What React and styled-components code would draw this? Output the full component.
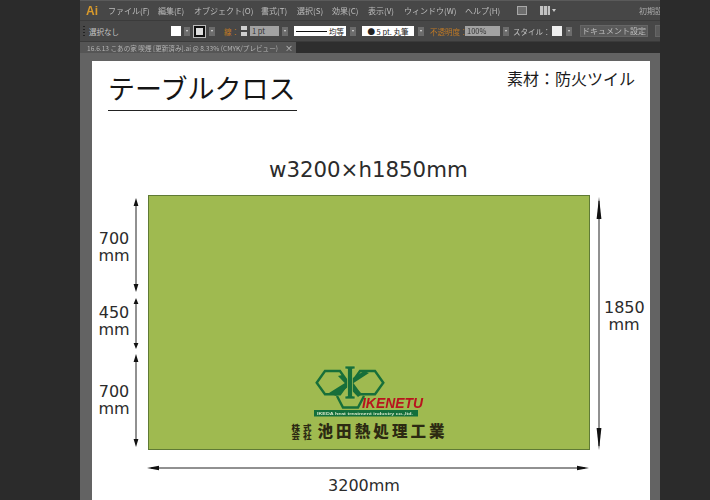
import styled, { createGlobalStyle } from 'styled-components';

const JP = `"Noto Sans CJK JP", "Noto Sans", sans-serif`;

const GlobalStyle = createGlobalStyle`
  html, body {
    margin: 0;
    background: #2b2b2b;
  }
`;

const menus = [
  ['ファイル(F)', 40],
  ['編集(E)', 26],
  ['オブジェクト(O)', 57],
  ['書式(T)', 26],
  ['選択(S)', 25],
  ['効果(C)', 26],
  ['表示(V)', 26],
  ['ウィンドウ(W)', 51],
  ['ヘルプ(H)', 34],
];

function Arrow({ length, head = 8, horizontal }) {
  if (horizontal) {
    return (
      <ArrowSvg width={length} height="10" viewBox={`0 0 ${length} 10`}>
        <path d={`M4 5H${length - 4}`} stroke="#222" strokeWidth="1" />
        <path d={`M0 5L${head} 2.8V7.2Z`} fill="#111" />
        <path d={`M${length} 5L${length - head} 2.8V7.2Z`} fill="#111" />
      </ArrowSvg>
    );
  }
  return (
    <ArrowSvg width="10" height={length} viewBox={`0 0 10 ${length}`}>
      <path d={`M5 4V${length - 4}`} stroke="#222" strokeWidth="1" />
      <path d={`M5 0L2.6 ${head}H7.4Z`} fill="#111" />
      <path d={`M5 ${length}L2.6 ${length - head}H7.4Z`} fill="#111" />
    </ArrowSvg>
  );
}

function Logo() {
  return (
    <LogoSvg width="155" height="58" viewBox="0 0 155 58">
      <g fill="none" stroke="#176f3a" strokeWidth="2.4">
        <path d="M24.7 19.7L33 8H48L56.3 19.7L48 31.3H33Z" />
        <path d="M91.3 19.7L83 8H68L59.7 19.7L68 31.3H83Z" />
        <path d="M45 33L51 44.5H66L72 33" />
      </g>
      <path d="M37 30L72 8L77 10L60 21L44 33Z" fill="#176f3a" />
      <path d="M46 13L50 12L70 31L66 34Z" fill="#176f3a" />
      <path d="M53 3H63V6H60.5V33H63V36H53V33H55.5V6H53Z" fill="#176f3a" stroke="#a9c45c" strokeWidth="0.7" />
      <LogoName x="70" y="45" textLength="61" lengthAdjust="spacingAndGlyphs">IKENETU</LogoName>
      <rect x="22" y="47" width="104" height="6.5" fill="#146f3c" />
      <LogoBanner x="25" y="52" textLength="96" lengthAdjust="spacingAndGlyphs">IKEDA heat treatment industry co.,ltd.</LogoBanner>
    </LogoSvg>
  );
}

export default function App() {
  return (
    <>
      <GlobalStyle />
      <Page>
        <Side />
        <Workspace>
          <MenuBar>
            <AiMark>Ai</AiMark>
            <Menus>
              {menus.map(([label, w]) => (
                <MenuItem key={label} $w={w}>{label}</MenuItem>
              ))}
            </Menus>
            <BarIcon $ml={18} />
            <LayoutIcon />
            <Caret $ml={2} />
            <PresetLabel>初期設定</PresetLabel>
          </MenuBar>

          <Toolbar>
            <Grip />
            <ToolLabel $w={82}>選択なし</ToolLabel>
            <Swatch />
            <DropButton $ml={3} />
            <StrokeSwatch />
            <DropButton $ml={4} />
            <OrangeLabel $ml={9} $w={17}>線：</OrangeLabel>
            <Stepper />
            <InputBox $w={29}>1 pt</InputBox>
            <DropButton $ml={3} />
            <WhiteSelect $ml={6} $w={52}>
              <StrokeLine />
              <span>均等</span>
            </WhiteSelect>
            <DropButton $ml={4} />
            <WhiteSelect $ml={6} $w={52}>
              <span>● 5 pt. 丸筆</span>
            </WhiteSelect>
            <DropButton $ml={4} />
            <OrangeLabel $ml={6} $w={32}>不透明度：</OrangeLabel>
            <InputBox $w={35}>100%</InputBox>
            <DropButton $ml={3} />
            <ToolLabel $ml={4} $w={39}>スタイル：</ToolLabel>
            <SmallSwatch />
            <DropButton $ml={4} />
            <DocButton $ml={8} $w={66}>ドキュメント設定</DocButton>
            <DocButton $ml={7} $w={12} />
          </Toolbar>

          <TabBar>
            <Tab>
              <span>16.6.13 こあの家 喫煙 [更新済み].ai @ 8.33% (CMYK/プレビュー)</span>
              <TabClose>×</TabClose>
            </Tab>
          </TabBar>

          <Canvas>
            <Artboard>
              <Header>
                <Title>テーブルクロス</Title>
                <Material>素材：防火ツイル</Material>
              </Header>

              <SizeHeading>w3200×h1850mm</SizeHeading>

              <Diagram>
                <LeftDims>
                  <Segment $h={94}>
                    <DimLabel $shift={2}>700<br />mm</DimLabel>
                    <Arrow length={94} />
                  </Segment>
                  <Segment $h={51}>
                    <DimLabel $shift={-2}>450<br />mm</DimLabel>
                    <Arrow length={51} head={6} />
                  </Segment>
                  <Segment $h={93}>
                    <DimLabel $shift={-1}>700<br />mm</DimLabel>
                    <Arrow length={93} />
                  </Segment>
                </LeftDims>

                <Board>
                  <Logo />
                  <CompanyRow>
                    <CompanyKind>株式<br />会社</CompanyKind>
                    <CompanyName>池田熱処理工業</CompanyName>
                  </CompanyRow>
                </Board>

                <RightDim>
                  <Arrow length={253} head={22} />
                  <RightLabel $shift={-1}>1850<br />mm</RightLabel>
                </RightDim>
              </Diagram>

              <WidthDim>
                <Arrow horizontal length={442} head={12} />
                <WidthLabel>3200mm</WidthLabel>
              </WidthDim>
            </Artboard>
          </Canvas>
        </Workspace>
        <Side $right />
      </Page>
    </>
  );
}

const Page = styled.div`
  display: flex;
  width: 710px;
  height: 500px;
  overflow: hidden;
  font-family: ${JP};
`;

const Side = styled.div`
  width: ${(p) => (p.$right ? 50 : 80)}px;
  flex: none;
  background: #2b2b2b;
`;

const Workspace = styled.div`
  width: 580px;
  flex: none;
  display: flex;
  flex-direction: column;
  background: #636363;
  overflow: hidden;
`;

const MenuBar = styled.div`
  height: 20px;
  flex: none;
  display: flex;
  align-items: center;
  background: #474747;
  border-top: 1px solid #5a5a5a;
  box-sizing: border-box;
  white-space: nowrap;
  filter: blur(0.3px);

  > * {
    flex: none;
  }
`;

const AiMark = styled.div`
  width: 28px;
  padding-left: 6px;
  box-sizing: border-box;
  color: #d99a2b;
  font: bold 12px "Liberation Sans", sans-serif;
`;

const Menus = styled.div`
  display: flex;
  gap: 10px;
`;

const MenuItem = styled.div`
  width: ${(p) => p.$w}px;
  color: #bdbdbd;
  font-size: 8px;
  white-space: nowrap;
`;

const BarIcon = styled.div`
  margin-left: ${(p) => p.$ml}px;
  width: 8px;
  height: 7px;
  border: 1px solid #a8a8a8;
  background: #6e6e6e;
`;

const LayoutIcon = styled.div`
  margin-left: 13px;
  width: 10px;
  height: 9px;
  background: repeating-linear-gradient(90deg, #c2c2c2 0 3px, #6a6a6a 3px 4px);
`;

const Caret = styled.div`
  margin-left: ${(p) => p.$ml}px;
  width: 0;
  height: 0;
  border-left: 2.5px solid transparent;
  border-right: 2.5px solid transparent;
  border-top: 3px solid #c8c8c8;
`;

const PresetLabel = styled.div`
  margin-left: 83px;
  color: #aaa;
  font-size: 8px;
`;

const Toolbar = styled.div`
  height: 21px;
  flex: none;
  display: flex;
  align-items: center;
  background: #474747;
  border-top: 1px solid #3b3b3b;
  box-sizing: border-box;
  white-space: nowrap;
  font-size: 7.5px;
  color: #c4c4c4;
  filter: blur(0.3px);

  > * {
    flex: none;
  }
`;

const Grip = styled.div`
  width: 2px;
  height: 11px;
  margin-left: 3px;
  margin-right: 4px;
  background: repeating-linear-gradient(180deg, #222 0 1px, transparent 1px 3px);
`;

const ToolLabel = styled.div`
  margin-left: ${(p) => p.$ml || 0}px;
  width: ${(p) => p.$w}px;
  white-space: nowrap;
`;

const OrangeLabel = styled(ToolLabel)`
  color: #c27a24;
`;

const Swatch = styled.div`
  width: 10px;
  height: 10px;
  background: #fff;
`;

const StrokeSwatch = styled.div`
  margin-left: 4px;
  width: 7px;
  height: 7px;
  border: 2px solid #111;
  outline: 1px solid #bbb;
  background: #ddd;
`;

const SmallSwatch = styled(Swatch)`
  background: #eee;
`;

const DropButton = styled.div`
  margin-left: ${(p) => p.$ml}px;
  width: 6px;
  height: 9px;
  background: #6c6c6c;
  position: relative;

  &::after {
    content: '';
    position: absolute;
    left: 1.5px;
    top: 3.5px;
    border-left: 1.5px solid transparent;
    border-right: 1.5px solid transparent;
    border-top: 2px solid #ddd;
  }
`;

const Stepper = styled.div`
  width: 6px;
  height: 10px;
  background: linear-gradient(180deg, #cfcfcf 0 4px, #474747 4px 6px, #cfcfcf 6px);
`;

const InputBox = styled.div`
  margin-left: 3px;
  width: ${(p) => p.$w}px;
  height: 10px;
  line-height: 10px;
  padding-left: 2px;
  box-sizing: border-box;
  background: #a2a2a2;
  color: #333;
`;

const WhiteSelect = styled.div`
  margin-left: ${(p) => p.$ml}px;
  width: ${(p) => p.$w}px;
  height: 10px;
  display: flex;
  align-items: center;
  justify-content: center;
  gap: 2px;
  overflow: hidden;
  background: #fff;
  color: #222;
  font-size: 7.5px;
`;

const StrokeLine = styled.div`
  width: 31px;
  height: 1px;
  background: #111;
`;

const DocButton = styled.div`
  margin-left: ${(p) => p.$ml}px;
  width: ${(p) => p.$w}px;
  height: 10px;
  line-height: 10px;
  text-align: center;
  background: #5a5a5a;
  border: 1px solid #666;
  color: #bcbcbc;
  font-size: 8px;
`;

const TabBar = styled.div`
  height: 12px;
  flex: none;
  background: #2e2e2e;
  border-top: 1px solid #3a3a3a;
  box-sizing: border-box;
`;

const Tab = styled.div`
  width: 216px;
  height: 100%;
  display: flex;
  align-items: center;
  justify-content: space-between;
  padding: 0 3px 0 7px;
  box-sizing: border-box;
  background: #555;
  color: #b4b4b4;
  font-size: 6.6px;
  white-space: nowrap;
  filter: blur(0.25px);
`;

const TabClose = styled.span`
  color: #ccc;
  font-size: 8px;
`;

const Canvas = styled.div`
  flex: 1;
  min-height: 0;
  padding: 8px 10px 0 12px;
  background: #636363;
`;

const Artboard = styled.div`
  height: 439px;
  overflow: hidden;
  background: #fff;
  display: flex;
  flex-direction: column;
`;

const Header = styled.div`
  height: 94px;
  flex: none;
  display: flex;
  justify-content: space-between;
  align-items: flex-start;
  padding: 0 15px 0 16px;
`;

const Title = styled.div`
  margin-top: 9px;
  width: 189px;
  height: 40px;
  line-height: 36px;
  border-bottom: 1px solid #222;
  color: #151515;
  font-size: 27px;
  white-space: nowrap;
`;

const Material = styled.div`
  margin-top: 5px;
  line-height: 24px;
  color: #1a1a1a;
  font-size: 16px;
  white-space: nowrap;
`;

const SizeHeading = styled.div`
  height: 30px;
  margin-bottom: 10px;
  flex: none;
  padding-left: 177px;
  color: #2b2b2b;
  font: 21.3px/30px "DejaVu Sans", sans-serif;
  white-space: nowrap;
`;

const Diagram = styled.div`
  height: 255px;
  flex: none;
  display: flex;
`;

const LeftDims = styled.div`
  width: 56px;
  flex: none;
  box-sizing: border-box;
  padding: 3px 7px 3px 5px;
  display: flex;
  flex-direction: column;
  justify-content: space-between;
`;

const Segment = styled.div`
  height: ${(p) => p.$h}px;
  display: flex;
  align-items: center;
`;

const DimLabel = styled.div`
  flex: 1;
  text-align: center;
  color: #2b2b2b;
  font: 16px/17px "DejaVu Sans", sans-serif;
  transform: translateY(${(p) => p.$shift || 0}px);
`;

const ArrowSvg = styled.svg`
  display: block;
  flex: none;
`;

const Board = styled.div`
  width: 442px;
  flex: none;
  box-sizing: border-box;
  display: flex;
  flex-direction: column;
  align-items: center;
  justify-content: flex-end;
  padding-bottom: 9px;
  background: #9fba50;
  border: 1px solid #5f7a35;
`;

const LogoSvg = styled.svg`
  display: block;
  filter: blur(0.35px);
`;

const LogoName = styled.text`
  fill: #b8141e;
  font: italic bold 14px "Liberation Sans", sans-serif;
`;

const LogoBanner = styled.text`
  fill: #d6e6c8;
  font: bold 4px "Liberation Sans", sans-serif;
`;

const CompanyRow = styled.div`
  width: 155px;
  height: 19px;
  display: flex;
  align-items: center;
  gap: 5px;
  color: #2c2a12;
`;

const CompanyKind = styled.div`
  width: 21px;
  font-size: 8.5px;
  line-height: 8px;
  font-weight: 900;
  letter-spacing: 3px;
  white-space: nowrap;
`;

const CompanyName = styled.div`
  font-size: 15.5px;
  line-height: 19px;
  font-weight: 900;
  letter-spacing: 3.1px;
  white-space: nowrap;
`;

const RightDim = styled.div`
  flex: none;
  display: flex;
  align-items: center;
  padding: 2px 0 0 4px;
`;

const RightLabel = styled(DimLabel)`
  width: 40px;
  flex: none;
  margin-bottom: 14px;
`;

const WidthDim = styled.div`
  margin-top: 13px;
  margin-left: 55px;
  width: 442px;
`;

const WidthLabel = styled.div`
  padding-right: 8px;
  text-align: center;
  color: #2b2b2b;
  font: 16px/26px "DejaVu Sans", sans-serif;
`;
